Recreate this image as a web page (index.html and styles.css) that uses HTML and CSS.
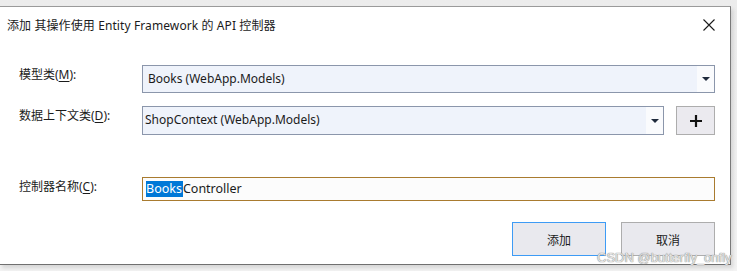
FILE: index.html
```html
<!DOCTYPE html>
<html lang="zh-CN">
<head>
    <meta charset="UTF-8">
    <title>添加 其操作使用 Entity Framework 的 API 控制器</title>
    <link rel="stylesheet" href="styles.css">
</head>
<body>
    <div class="dialog">
        <div class="titlebar">
            <span class="title">添加 其操作使用 Entity Framework 的 API 控制器</span>
            <svg class="close" width="12" height="12" viewBox="0 0 12 12">
                <path d="M0.5 0.5 L11.5 11.5 M11.5 0.5 L0.5 11.5" stroke="#1a1a1a" stroke-width="1.1" fill="none"/>
            </svg>
        </div>

        <div class="form">
            <div class="row row-model">
                <label class="label">模型类(<u>M</u>):</label>
                <div class="combo">
                    <span class="combo-text">Books (WebApp.Models)</span>
                    <span class="combo-arrow"><i></i></span>
                </div>
            </div>

            <div class="row row-context">
                <label class="label">数据上下文类(<u>D</u>):</label>
                <div class="combo combo-short">
                    <span class="combo-text">ShopContext (WebApp.Models)</span>
                    <span class="combo-arrow"><i></i></span>
                </div>
                <button class="plus-btn">
                    <svg width="14" height="14" viewBox="0 0 14 14">
                        <path d="M7 1 V13 M1 7 H13" stroke="#111" stroke-width="2.2" fill="none"/>
                    </svg>
                </button>
            </div>

            <div class="row row-name">
                <label class="label">控制器名称(<u>C</u>):</label>
                <div class="textbox"><span class="selected">Books</span>Controller</div>
            </div>

            <div class="actions">
                <button class="btn btn-default">添加</button>
                <button class="btn">取消</button>
            </div>
        </div>
    </div>

    <div class="watermark">CSDN @butterfly_onfly</div>
</body>
</html>
```

FILE: styles.css
```css
* {
    margin: 0;
    padding: 0;
    box-sizing: border-box;
}

body {
    font-family: 'Noto Sans', 'Noto Sans CJK SC', sans-serif;
    font-size: 12px;
    color: #1b1b1b;
    background: linear-gradient(180deg, #ececec 0%, #f3f3f3 100%);
    width: 737px;
    height: 271px;
    overflow: hidden;
    position: relative;
}

.dialog {
    margin-top: 6px;
    width: 731px;
    height: 259px;
    background: #fff;
    border-top: 1px solid #9a9a9a;
    border-right: 1px solid #7a7a7a;
    border-bottom: 1px solid #707070;
    box-shadow: 2px 3px 4px rgba(0,0,0,0.12);
}

.titlebar {
    height: 36px;
    display: flex;
    align-items: center;
    justify-content: space-between;
    padding: 0 15px 0 7px;
}

.title {
    font-size: 12px;
    letter-spacing: 0.1px;
}

.close {
    display: block;
}

.form {
    padding: 22px 15px 0 19px;
}

.row {
    display: flex;
    align-items: flex-start;
}

.label {
    width: 123px;
    padding-top: 2px;
    line-height: 16px;
}

.label u {
    text-underline-offset: 2px;
}

.combo {
    flex: 1;
    height: 28px;
    display: flex;
    background: #eff3fb;
    border: 1px solid #8b96ab;
}

.combo-text {
    flex: 1;
    padding: 5px 0 0 5px;
    line-height: 16px;
}

.combo-arrow {
    width: 17px;
    background: #fafbfd;
    display: flex;
    align-items: center;
    justify-content: center;
}

.combo-arrow i {
    display: block;
    width: 0;
    height: 0;
    border-left: 4px solid transparent;
    border-right: 4px solid transparent;
    border-top: 4px solid #1f2a3c;
}

.row-context {
    margin-top: 13px;
}

.row-context .combo {
    height: 29px;
}

.combo-short .combo-text {
    padding-left: 2px;
}

.plus-btn {
    width: 39px;
    height: 29px;
    margin-left: 12px;
    background: #ebeaef;
    border: 1px solid #adadad;
    display: flex;
    align-items: center;
    justify-content: center;
}

.row-name {
    margin-top: 42px;
}

.textbox {
    flex: 1;
    height: 24px;
    background: #fcfcfc;
    border: 1px solid #a97b2f;
    padding: 3px 0 0 3px;
    line-height: 16px;
    font-size: 12.5px;
}

.selected {
    background: #0078d7;
    color: #fff;
    display: inline-block;
    padding-right: 1px;
}

.actions {
    margin-top: 21px;
    display: flex;
    justify-content: flex-end;
    gap: 15px;
}

.btn {
    width: 94px;
    height: 34px;
    font-family: 'Noto Sans CJK SC', sans-serif;
    font-size: 12px;
    color: #1b1b1b;
    background: #e9e9ee;
    border: 1px solid #adadad;
}

.btn-default {
    border-color: #3d9bf5;
}

.watermark {
    position: absolute;
    left: 597px;
    top: 250px;
    font-family: 'Liberation Sans', sans-serif;
    font-size: 13px;
    line-height: 15px;
    color: #e4e4e4;
    text-shadow: 0 0 1px #8a8a8a, 0 0 1px #8a8a8a;
    white-space: nowrap;
}
```
